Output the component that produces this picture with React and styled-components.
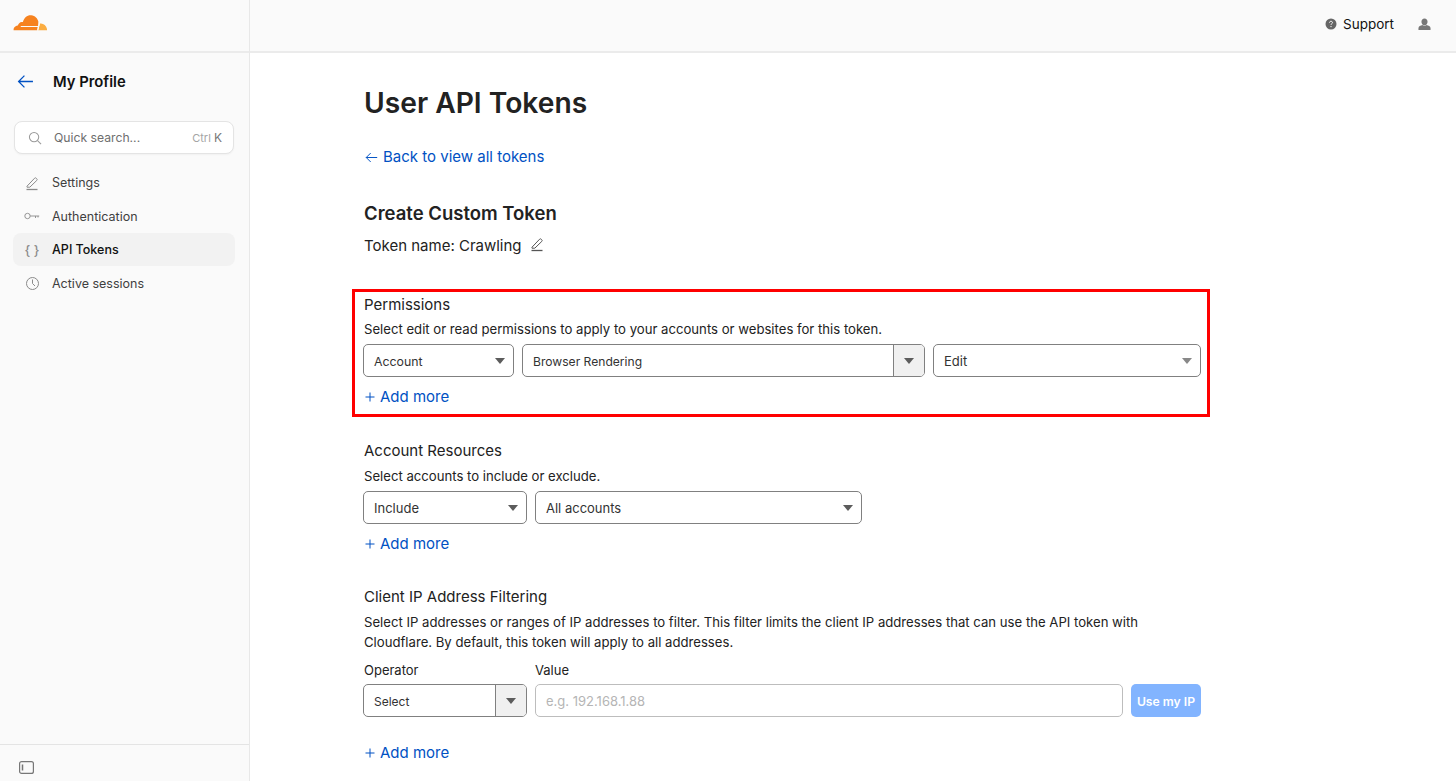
import React from "react";
import styled, { createGlobalStyle } from "styled-components";

const GlobalStyle = createGlobalStyle`
  html, body {
    margin: 0;
    padding: 0;
    height: 100%;
    overflow: hidden;
    background: #fff;
    font-family: "Inter", "Liberation Sans", sans-serif;
    color: #1d1d1d;
  }
`;

const Page = styled.div`
  display: flex;
  width: 1456px;
  height: 781px;
  overflow: hidden;
`;

const Sidebar = styled.aside`
  width: 250px;
  flex: none;
  box-sizing: border-box;
  display: flex;
  flex-direction: column;
  background: #fafafa;
  border-right: 1px solid #e8e8e8;
`;

const LogoBar = styled.div`
  height: 53px;
  box-sizing: border-box;
  flex: none;
  padding: 14px 0 0 13px;
  border-bottom: 2px solid #ebebeb;
`;

const ProfileRow = styled.div`
  display: flex;
  align-items: center;
  height: 57px;
  padding-left: 17px;
  gap: 19px;
  font-size: 14.8px;
  font-weight: 600;
  color: #111;
`;

const SearchBox = styled.div`
  display: flex;
  align-items: center;
  box-sizing: border-box;
  height: 33px;
  margin: 11px 15px 12px 14px;
  padding: 0 11px 0 13px;
  background: #fff;
  border: 1px solid #e4e4e4;
  border-radius: 8px;
  box-shadow: 0 1px 2px rgba(0, 0, 0, 0.04);
  font-size: 12.2px;
  color: #6e6e6e;
`;

const SearchText = styled.span`
  margin-left: 12px;
  flex: 1;
`;

const Shortcut = styled.span`
  font-size: 11px;
  color: #a5a5a5;

  b {
    font-size: 12px;
    font-weight: 400;
    color: #777;
  }
`;

const NavList = styled.nav`
  display: flex;
  flex-direction: column;
  margin: 0 14px 0 13px;
  gap: 0.6px;
`;

const NavItem = styled.div`
  display: flex;
  align-items: center;
  height: 33px;
  padding-left: 11px;
  gap: 12px;
  border-radius: 8px;
  font-size: 12.5px;
  color: ${(p) => (p.$active ? "#111" : "#3f3f3f")};
  font-weight: ${(p) => (p.$active ? 500 : 400)};
  background: ${(p) => (p.$active ? "#f2f2f2" : "transparent")};
`;

const NavIcon = styled.span`
  width: 16px;
  height: 16px;
  display: flex;
  align-items: center;
  justify-content: center;
  color: #8a8a8a;
  font-size: 13px;
`;

const SidebarFooter = styled.div`
  margin-top: auto;
  height: 37px;
  box-sizing: border-box;
  display: flex;
  border-top: 1px solid #e4e4e4;
  padding: 16px 0 0 19px;
`;

const Main = styled.div`
  flex: 1;
  display: flex;
  flex-direction: column;
  min-width: 0;
`;

const TopBar = styled.header`
  height: 53px;
  box-sizing: border-box;
  flex: none;
  display: flex;
  align-items: center;
  justify-content: flex-end;
  padding: 0 25px 3px 0;
  background: #fafafa;
  border-bottom: 2px solid #ebebeb;
`;

const SupportLink = styled.div`
  display: flex;
  align-items: center;
  gap: 6px;
  margin-right: 24px;
  font-size: 13.5px;
  color: #111;
`;

const Content = styled.main`
  width: 837px;
  padding: 29px 0 0 114px;
`;

const Title = styled.h1`
  margin: 0;
  font-size: 28.2px;
  line-height: 42px;
  font-weight: 600;
  color: #222;
`;

const LinkRow = styled.a`
  display: flex;
  align-items: center;
  gap: 5px;
  margin-left: 1px;
  font-size: 15px;
  line-height: 20px;
  color: #0051c3;
`;

const BackLink = styled(LinkRow)`
  margin-top: 23px;
`;

const SubTitle = styled.h2`
  margin: 34px 0 0;
  font-size: 18.5px;
  line-height: 24px;
  font-weight: 600;
  color: #222;
`;

const TokenName = styled.div`
  display: flex;
  align-items: center;
  gap: 8px;
  margin-top: 11px;
  font-size: 15px;
  line-height: 20px;
  color: #222;

  svg {
    margin: -4px 0 0 -1px;
  }
`;

const Section = styled.section`
  margin-top: ${(p) => p.$top}px;
`;

const HighlightSection = styled.section`
  box-sizing: border-box;
  width: 858px;
  height: 128px;
  margin: 33px 0 0 -12px;
  padding: 3px 9px 0 9px;
  border: 3px solid #f00;
`;

const SectionTitle = styled.div`
  font-size: 15px;
  line-height: 20px;
  color: #222;
`;

const SectionHint = styled.div`
  margin-top: ${(p) => p.$top ?? 5}px;
  max-width: 800px;
  font-size: 13.15px;
  line-height: 20px;
  color: #222;
`;

const Row = styled.div`
  display: flex;
  gap: 8px;
  margin: ${(p) => p.$top ?? 4}px 0 0 -1px;
`;

const Select = styled.div`
  box-sizing: border-box;
  width: ${(p) => p.$w}px;
  height: 33px;
  flex: none;
  display: flex;
  align-items: center;
  justify-content: space-between;
  padding: 0 8px 0 10px;
  background: #fff;
  border: 1px solid #808080;
  border-radius: 5px;
  font-size: ${(p) => p.$size || 13}px;
  color: #333;
`;

const SelectText = styled.span`
  padding-top: ${(p) => (p.$low ? 2 : 0)}px;
`;

const ComboSelect = styled(Select)`
  padding: 0 0 0 10px;
  overflow: hidden;
`;

const ComboButton = styled.span`
  width: 30px;
  height: 100%;
  flex: none;
  display: flex;
  align-items: center;
  justify-content: center;
  background: #f0f0f0;
  border-left: 1px solid #808080;
`;

const Caret = styled.span`
  width: 0;
  height: 0;
  border-left: 5.5px solid transparent;
  border-right: 5.5px solid transparent;
  border-top: 6px solid ${(p) => p.$color || "#5c5c5c"};
`;

const AddMore = styled(LinkRow)`
  margin-top: ${(p) => p.$top}px;
`;

const FieldLabels = styled.div`
  display: flex;
  gap: 8px;
  margin-top: 8px;
  font-size: 13px;
  line-height: 20px;
  color: #222;

  span:first-child {
    width: 163px;
  }
`;

const ValueInput = styled.div`
  box-sizing: border-box;
  width: 588px;
  height: 33px;
  flex: none;
  display: flex;
  align-items: center;
  padding: 0 10px;
  background: #fff;
  border: 1px solid #bdbdbd;
  border-radius: 5px;
  font-size: 13px;
  color: #b5b5b5;
`;

const DisabledButton = styled.div`
  box-sizing: border-box;
  width: 70px;
  height: 33px;
  flex: none;
  display: flex;
  align-items: center;
  justify-content: center;
  padding-top: 2px;
  background: #82b4ff;
  border-radius: 5px;
  font-size: 12.2px;
  font-weight: 600;
  color: #fff;
`;

const PencilIcon = ({ size = 16, color = "#8a8a8a" }) => (
  <svg width={size} height={size} viewBox="0 0 16 16" fill="none" stroke={color} strokeWidth="1">
    <path d="M3 11.2 10.6 3.2c.5-.5 1.1-.5 1.6 0l.6.6c.5.5.5 1.100 0 1.600L5.800 12.200H3Z" />
    <path d="M2.500 14.500h11" strokeWidth="1.300" />
  </svg>
);

const ArrowLeft = ({ size = 16 }) => (
  <svg width={size} height={size} viewBox="0 0 16 16" fill="none" stroke="#0051c3" strokeWidth="1.200">
    <path d="M15 8H1.500M7 2.500 1.500 8 7 13.500" />
  </svg>
);

const PlusIcon = () => (
  <svg width="10" height="10" viewBox="0 0 10 10" fill="none" stroke="#0051c3" strokeWidth="1">
    <path d="M5 .5v9M.5 5h9" />
  </svg>
);

const Logo = () => (
  <svg width="35" height="18" viewBox="0 0 36 18">
    <path
      fill="#f6821f"
      d="M25 16.500H.6c-.3-2.200 1-4.200 3.200-4.800.4-.1.900-.2 1.300-.1.300-2 1.900-3.500 3.900-3.700.4 0 .8 0 1.200.1C11.500 3.200 14.800.6 18.800 1c3.800.4 6.700 3.300 7.300 6.700.300 1.900 0 3.800-.6 5.300Z"
    />
    <path
      fill="#fbad41"
      d="M27.800 9.500c.3 0 .6 0 .9.100 3 .2 5.600 2.200 6.200 5.400.1.500.100 1 .1 1.500H25.800c.7-2.200 1.300-4.700 2-7Z"
    />
    <path fill="#fafafa" d="M8 12.100h18.400l-.3.900H8ZM28 7.800l-1.900 8.700-1.200-.1 1.700-8.600Z" />
  </svg>
);

export default function App() {
  return (
    <Page>
      <GlobalStyle />
      <Sidebar>
        <LogoBar>
          <Logo />
        </LogoBar>
        <ProfileRow>
          <ArrowLeft size={17} />
          My Profile
        </ProfileRow>
        <SearchBox>
          <svg width="14" height="14" viewBox="0 0 15 15" fill="none" stroke="#9a9a9a" strokeWidth="1.100">
            <circle cx="6.500" cy="6.500" r="5" />
            <path d="m10.200 10.200 3.800 3.800" />
          </svg>
          <SearchText>Quick search...</SearchText>
          <Shortcut>
            Ctrl <b>K</b>
          </Shortcut>
        </SearchBox>
        <NavList>
          <NavItem>
            <NavIcon>
              <PencilIcon />
            </NavIcon>
            Settings
          </NavItem>
          <NavItem>
            <NavIcon>
              <svg width="16" height="16" viewBox="0 0 16 16" fill="none" stroke="#8a8a8a" strokeWidth="0.900">
                <circle cx="3.500" cy="8" r="2.700" />
                <path d="M6.200 8h9M11.500 8v2M14 8v1.500" />
              </svg>
            </NavIcon>
            Authentication
          </NavItem>
          <NavItem $active>
            <NavIcon>{"{ }"}</NavIcon>
            API Tokens
          </NavItem>
          <NavItem>
            <NavIcon>
              <svg width="15" height="15" viewBox="0 0 15 15" fill="none" stroke="#8a8a8a" strokeWidth="1">
                <circle cx="7.500" cy="7.500" r="6" />
                <path d="M7.500 3.500v4l2.500 2.500" />
              </svg>
            </NavIcon>
            Active sessions
          </NavItem>
        </NavList>
        <SidebarFooter>
          <svg width="15" height="13" viewBox="0 0 15 13" fill="none" stroke="#777" strokeWidth="1.200">
            <rect x="0.600" y="0.600" width="13.800" height="11.800" rx="2" />
            <path d="M3.500 3.500v6" strokeWidth="1.500" />
          </svg>
        </SidebarFooter>
      </Sidebar>
      <Main>
        <TopBar>
          <SupportLink>
            <svg width="12" height="12" viewBox="0 0 12 12">
              <circle cx="6" cy="6" r="5.500" fill="#666" />
              <path d="M4.500 4.700C4.500 3.800 5.200 3.300 6 3.300s1.500.5 1.500 1.300c0 1.100-1.500 1.100-1.500 2.200" fill="none" stroke="#fff" strokeWidth="1" />
              <circle cx="6" cy="8.600" r="0.700" fill="#fff" />
            </svg>
            Support
          </SupportLink>
          <svg width="13" height="13" viewBox="0 0 14 14" fill="#777">
            <path d="M7 .5c2 0 3.300 1.500 3.300 3.500S9 8 7 8 3.700 6 3.700 4 5 .5 7 .5ZM4.800 7.600C5.400 8.300 6.100 8.700 7 8.700s1.600-.4 2.200-1.100c2.200.5 4 1.400 4.300 3.200v2.200H.5v-2.200c.3-1.800 2.100-2.700 4.300-3.200Z" />
          </svg>
        </TopBar>
        <Content>
          <Title>User API Tokens</Title>
          <BackLink>
            <ArrowLeft size={13} />
            Back to view all tokens
          </BackLink>
          <SubTitle>Create Custom Token</SubTitle>
          <TokenName>
            Token name: Crawling
            <PencilIcon color="#555" />
          </TokenName>
          <HighlightSection>
            <SectionTitle>Permissions</SectionTitle>
            <SectionHint $top={4}>Select edit or read permissions to apply to your accounts or websites for this token.</SectionHint>
            <Row $top={5}>
              <Select $w={151} $size={12.3}>
                <SelectText $low>Account</SelectText>
                <Caret />
              </Select>
              <ComboSelect $w={403} $size={12.1}>
                <SelectText $low>Browser Rendering</SelectText>
                <ComboButton>
                  <Caret />
                </ComboButton>
              </ComboSelect>
              <Select $w={268}>
                <SelectText>Edit</SelectText>
                <Caret $color="#888" />
              </Select>
            </Row>
            <AddMore $top={10}>
              <PlusIcon />
              Add more
            </AddMore>
          </HighlightSection>
          <Section $top={24}>
            <SectionTitle>Account Resources</SectionTitle>
            <SectionHint>Select accounts to include or exclude.</SectionHint>
            <Row $top={5}>
              <Select $w={164}>
                <SelectText>Include</SelectText>
                <Caret />
              </Select>
              <Select $w={327}>
                <SelectText>All accounts</SelectText>
                <Caret />
              </Select>
            </Row>
            <AddMore $top={10}>
              <PlusIcon />
              Add more
            </AddMore>
          </Section>
          <Section $top={33}>
            <SectionTitle>Client IP Address Filtering</SectionTitle>
            <SectionHint>
              Select IP addresses or ranges of IP addresses to filter. This filter limits the client IP addresses that can use the API token with Cloudflare. By default, this token will apply to all addresses.
            </SectionHint>
            <FieldLabels>
              <span>Operator</span>
              <span>Value</span>
            </FieldLabels>
            <Row>
              <ComboSelect $w={164} $size={12}>
                <SelectText $low>Select</SelectText>
                <ComboButton>
                  <Caret />
                </ComboButton>
              </ComboSelect>
              <ValueInput>e.g. 192.168.1.88</ValueInput>
              <DisabledButton>Use my IP</DisabledButton>
            </Row>
            <AddMore $top={26}>
              <PlusIcon />
              Add more
            </AddMore>
          </Section>
        </Content>
      </Main>
    </Page>
  );
}
